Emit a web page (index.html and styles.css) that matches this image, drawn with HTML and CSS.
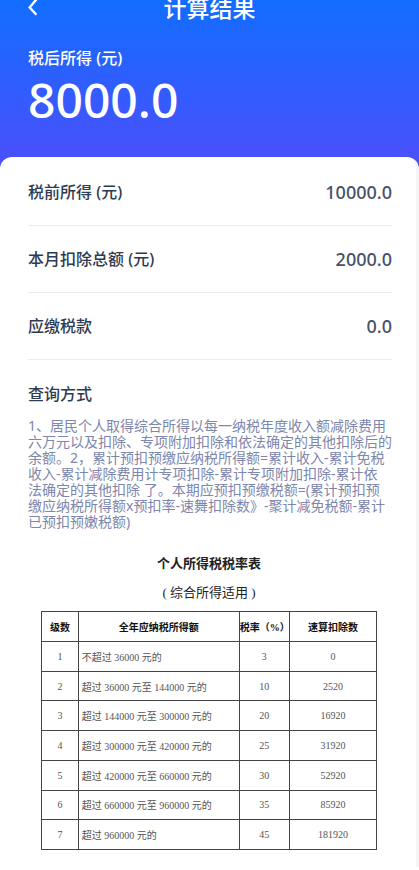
FILE: index.html
```
<!DOCTYPE html>
<html lang="zh-CN">
  <head>
    <meta charset="UTF-8">
    <meta name="viewport" content="width=device-width, initial-scale=1.0">
    <title>计算结果</title>
    <link rel="stylesheet" href="styles.css">
  </head>
  <body>
    <header class="hero">
      <div class="navbar">
        <button class="back-button" type="button" aria-label="返回">
          <svg width="10" height="16" viewBox="0 0 10 16" fill="none" stroke="#fff" stroke-width="2.3">
            <path d="M8.4 -0.6 L1.6 7.4 L8.4 14.8" />
          </svg>
        </button>
        <h1>计算结果</h1>
      </div>
      <p class="hero-label">税后所得 (元)</p>
      <p class="hero-amount">8000.0</p>
    </header>
    <main class="card">
      <dl class="summary">
        <div class="row">
          <dt>税前所得 (元)</dt>
          <dd>10000.0</dd>
        </div>
        <div class="row">
          <dt>本月扣除总额 (元)</dt>
          <dd>2000.0</dd>
        </div>
        <div class="row">
          <dt>应缴税款</dt>
          <dd>0.0</dd>
        </div>
      </dl>
      <h2>查询方式</h2>
      <p class="description">
        1、居民个人取得综合所得以每一纳税年度收入额减除费用<br>
        六万元以及扣除、专项附加扣除和依法确定的其他扣除后的<br>
        余额。2，累计预扣预缴应纳税所得额=累计收入-累计免税<br>
        收入-累计减除费用计专项扣除-累计专项附加扣除-累计依<br>
        法确定的其他扣除 了。本期应预扣预缴税额=(累计预扣预<br>
        缴应纳税所得额x预扣率-速舞扣除数》-聚计减免税额-累计<br>
        已预扣预嫩税额)
      </p>
      <section class="rates">
        <h3>个人所得税税率表</h3>
        <p class="rates-note">( 综合所得适用 )</p>
        <table>
          <thead>
            <tr>
              <th class="col-level">级数</th>
              <th class="col-range">全年应纳税所得额</th>
              <th class="col-rate">税率（%）</th>
              <th>速算扣除数</th>
            </tr>
          </thead>
          <tbody>
            <tr>
              <td>1</td>
              <td class="range">不超过 36000 元的</td>
              <td>3</td>
              <td>0</td>
            </tr>
            <tr>
              <td>2</td>
              <td class="range">超过 36000 元至 144000 元的</td>
              <td>10</td>
              <td>2520</td>
            </tr>
            <tr>
              <td>3</td>
              <td class="range">超过 144000 元至 300000 元的</td>
              <td>20</td>
              <td>16920</td>
            </tr>
            <tr>
              <td>4</td>
              <td class="range">超过 300000 元至 420000 元的</td>
              <td>25</td>
              <td>31920</td>
            </tr>
            <tr>
              <td>5</td>
              <td class="range">超过 420000 元至 660000 元的</td>
              <td>30</td>
              <td>52920</td>
            </tr>
            <tr>
              <td>6</td>
              <td class="range">超过 660000 元至 960000 元的</td>
              <td>35</td>
              <td>85920</td>
            </tr>
            <tr>
              <td>7</td>
              <td class="range">超过 960000 元的</td>
              <td>45</td>
              <td>181920</td>
            </tr>
          </tbody>
        </table>
      </section>
    </main>
  </body>
</html>
```
FILE: styles.css
```
* {
  box-sizing: border-box;
}

body {
  margin: 0;
  background-color: #fff;
  font-family: "Noto Sans", "Noto Sans CJK SC", sans-serif;
  color: #2f3b50;
}

h1, h2, h3, p, dl, dd {
  margin: 0;
}

.hero {
  padding: 0 28px 41px;
  background: linear-gradient(#126dff, #4a50fc 160px);
  color: #fff;
}

.navbar {
  display: grid;
  grid-template-columns: 1fr auto 1fr;
  align-items: center;
  height: 16px;
}

.back-button {
  justify-self: start;
  display: flex;
  padding: 0;
  border: none;
  background: none;
  cursor: pointer;
}

.navbar h1 {
  font-size: 23px;
  font-weight: 500;
  line-height: 16px;
}

.hero-label {
  margin-top: 30px;
  font-size: 16px;
  font-weight: 500;
  line-height: 24px;
}

.hero-amount {
  margin-top: 2px;
  font-size: 48px;
  font-weight: 500;
  line-height: 56px;
}

.card {
  margin-top: -12px;
  padding: 2px 24px 17px 28px;
  border-right: 3px solid #f5f5f5;
  border-radius: 12px 12px 0 0;
  background-color: #fff;
}

.row {
  display: flex;
  justify-content: space-between;
  padding: 21px 0;
  border-bottom: 1px solid #ececee;
  line-height: 24px;
  font-weight: 500;
}

.row dt {
  font-size: 16px;
}

.row dd {
  font-size: 18px;
  color: #465166;
}

.card h2 {
  margin-top: 22px;
  font-size: 16px;
  font-weight: 500;
  line-height: 24px;
}

.description {
  margin-top: 12px;
  font-size: 14px;
  line-height: 16px;
  color: #7d86ad;
}

.rates {
  margin-top: 24px;
  padding: 0 15px 0 13px;
  font-family: "Liberation Serif", "Noto Sans CJK SC", serif;
  text-align: center;
  color: #222;
}

.rates h3 {
  font-size: 13px;
  line-height: 20px;
}

.rates-note {
  margin-top: 9px;
  font-size: 13px;
  line-height: 20px;
}

table {
  width: 100%;
  height: 239px;
  margin-top: 8px;
  border-collapse: collapse;
  table-layout: fixed;
  font-size: 10px;
}

th,
td {
  padding: 0;
  border: 1px solid #444;
  white-space: nowrap;
}

th {
  height: 30px;
  color: #111;
}

td {
  color: #555;
}

.range {
  padding-left: 3px;
  text-align: left;
}

.col-level {
  width: 11%;
}

.col-range {
  width: 48%;
}

.col-rate {
  width: 15%;
}
```
